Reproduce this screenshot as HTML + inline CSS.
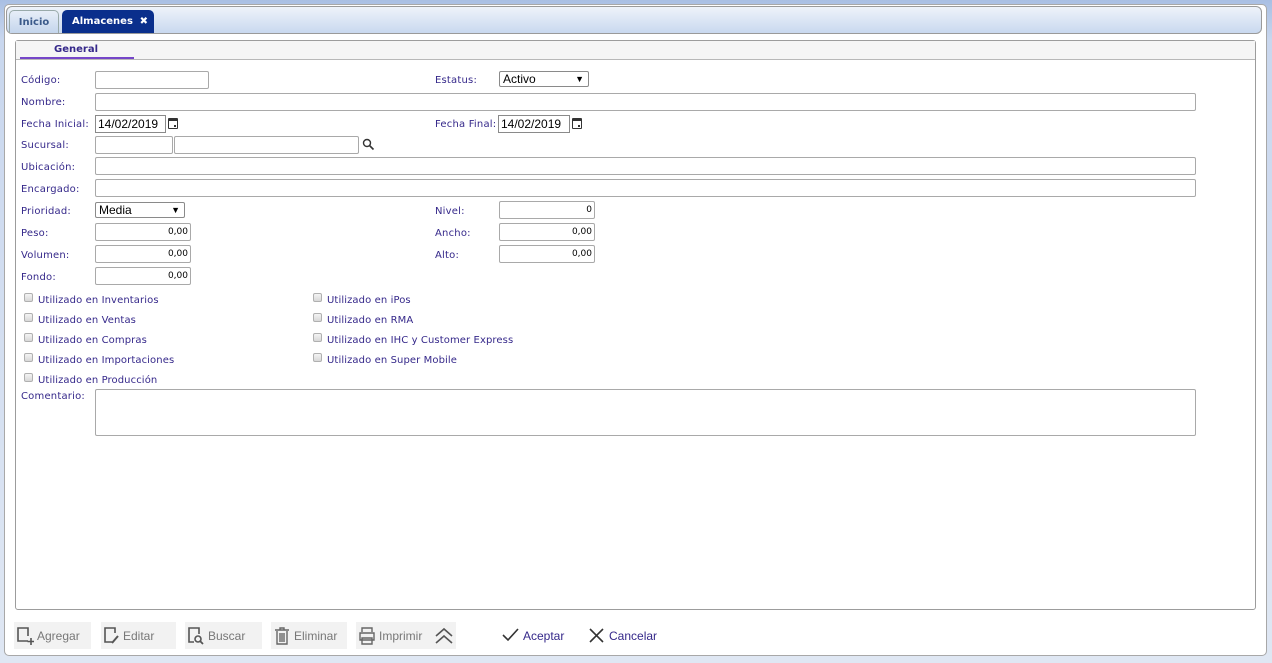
<!DOCTYPE html>
<html><head><meta charset="utf-8"><style>
*{box-sizing:border-box;margin:0;padding:0}
body{width:1272px;height:663px;background:linear-gradient(#a9bfe3,#c9d7ee 40px,#dfe7f3);font-family:"DejaVu Sans","Liberation Sans",sans-serif;font-size:10px;position:relative;overflow:hidden}
.a{position:absolute}
#outer{left:4px;top:4px;width:1263px;height:652px;background:#fff;border:1px solid #a8a8a8;border-radius:5px}
#tabbar{left:6px;top:6px;width:1256px;height:28px;background:linear-gradient(#eef3fa,#c9d9ef);border:1px solid #9a9a9a;border-radius:6px}
.tab{height:23px;top:10px;border-radius:5px 5px 0 0;font-weight:bold;font-size:10px;line-height:24px;text-align:center}
#inner{left:15px;top:40px;width:1241px;height:570px;border:1px solid #9c9c9c;border-radius:3px;background:#fff}
#hdr{left:16px;top:41px;width:1239px;height:19px;background:#f5f5f5;border-bottom:1px solid #b8b8b8}
.lb{position:absolute;color:#35288a;font-size:10px;letter-spacing:0.2px;margin-top:1px}
.in{position:absolute;border:1px solid #a9a9a9;border-radius:2px;background:#fff;height:18px;color:#000;line-height:16px;text-align:right;padding-right:2px;font-family:"DejaVu Sans",sans-serif;font-size:9px}
.dt{position:absolute;border:1px solid #8a8a8a;height:18px;width:72px;line-height:16px;padding-left:2px;font-family:"Liberation Sans",sans-serif;font-size:12px}
.sel{position:absolute;border:1px solid #8a8a8a;border-radius:2px;height:16px;font-family:"Liberation Sans",sans-serif;font-size:12px;line-height:14px;padding-left:3px}
.sel:after{content:"▼";position:absolute;right:4px;top:0;font-size:9px}
.cb{position:absolute;width:9px;height:9px;border:1px solid #b0b0b0;border-radius:2px;background:linear-gradient(#f4f4f4,#d8d8d8)}
.ct{position:absolute;color:#35288a;font-size:10px;letter-spacing:0.1px;margin-top:1px}
.btn{position:absolute;top:622px;height:27px;background:#f2f2f2;color:#777;font-family:"Liberation Sans",sans-serif;font-size:12px;line-height:28px}
.btn svg{position:absolute;top:4px}
.btn span{position:absolute}
.cal{position:absolute;width:10px;height:11px;border:1.5px solid #333;border-top-width:3px;border-radius:1px}
.cal:after{content:"";position:absolute;right:1px;bottom:1px;width:2px;height:2px;background:#333}
</style></head><body>
<div id="outer" class="a"></div>
<div id="tabbar" class="a"></div>
<div class="a tab" style="left:9px;width:50px;background:linear-gradient(#e7eef8,#c4d5ec);border:1px solid #9aa;border-bottom:none;color:#3b5a8a">Inicio</div>
<div class="a tab" style="left:62px;width:92px;background:#0a2f8c;color:#fff;text-align:left;padding-left:10px">Almacenes <span style="position:absolute;right:6px">✖</span></div>
<div id="inner" class="a"></div>
<div id="hdr" class="a"></div>
<div class="a" style="left:54px;top:44px;font-weight:bold;color:#35288a;font-size:10px">General</div>
<div class="a" style="left:20px;top:57px;width:114px;height:2px;background:#7546c8"></div>

<div class="lb" style="left:21px;top:74px">Código:</div>
<div class="in" style="left:95px;top:71px;width:114px"></div>
<div class="lb" style="left:435px;top:74px">Estatus:</div>
<div class="sel" style="left:499px;top:71px;width:90px">Activo</div>
<div class="lb" style="left:21px;top:96px">Nombre:</div>
<div class="in" style="left:95px;top:93px;width:1101px"></div>
<div class="lb" style="left:21px;top:118px">Fecha Inicial:</div>
<div class="dt" style="left:95px;top:115px;width:71px">14/02/2019</div>
<div class="cal" style="left:168px;top:118px"></div>
<div class="lb" style="left:435px;top:118px">Fecha Final:</div>
<div class="dt" style="left:498px;top:115px">14/02/2019</div>
<div class="cal" style="left:572px;top:118px"></div>
<div class="lb" style="left:21px;top:139px">Sucursal:</div>
<div class="in" style="left:95px;top:136px;width:78px"></div>
<div class="in" style="left:174px;top:136px;width:185px"></div>
<svg class="a" style="left:362px;top:138px" width="13" height="13" viewBox="0 0 13 13"><circle cx="5" cy="5" r="3.5" fill="none" stroke="#333" stroke-width="1.4"/><path d="M7.5 7.5L11.5 11.5" stroke="#333" stroke-width="1.6"/></svg>
<div class="lb" style="left:21px;top:161px">Ubicación:</div>
<div class="in" style="left:95px;top:157px;width:1101px"></div>
<div class="lb" style="left:21px;top:183px">Encargado:</div>
<div class="in" style="left:95px;top:179px;width:1101px"></div>
<div class="lb" style="left:21px;top:205px">Prioridad:</div>
<div class="sel" style="left:95px;top:202px;width:90px">Media</div>
<div class="lb" style="left:435px;top:205px">Nivel:</div>
<div class="in" style="left:499px;top:201px;width:96px">0</div>
<div class="lb" style="left:21px;top:227px">Peso:</div>
<div class="in" style="left:95px;top:223px;width:96px">0,00</div>
<div class="lb" style="left:435px;top:227px">Ancho:</div>
<div class="in" style="left:499px;top:223px;width:96px">0,00</div>
<div class="lb" style="left:21px;top:249px">Volumen:</div>
<div class="in" style="left:95px;top:245px;width:96px">0,00</div>
<div class="lb" style="left:435px;top:249px">Alto:</div>
<div class="in" style="left:499px;top:245px;width:96px">0,00</div>
<div class="lb" style="left:21px;top:271px">Fondo:</div>
<div class="in" style="left:95px;top:267px;width:96px">0,00</div>

<div class="cb" style="left:24px;top:293px"></div><div class="ct" style="left:38px;top:294px">Utilizado en Inventarios</div>
<div class="cb" style="left:24px;top:313px"></div><div class="ct" style="left:38px;top:314px">Utilizado en Ventas</div>
<div class="cb" style="left:24px;top:333px"></div><div class="ct" style="left:38px;top:334px">Utilizado en Compras</div>
<div class="cb" style="left:24px;top:353px"></div><div class="ct" style="left:38px;top:354px">Utilizado en Importaciones</div>
<div class="cb" style="left:24px;top:373px"></div><div class="ct" style="left:38px;top:374px">Utilizado en Producción</div>
<div class="cb" style="left:313px;top:293px"></div><div class="ct" style="left:327px;top:294px">Utilizado en iPos</div>
<div class="cb" style="left:313px;top:313px"></div><div class="ct" style="left:327px;top:314px">Utilizado en RMA</div>
<div class="cb" style="left:313px;top:333px"></div><div class="ct" style="left:327px;top:334px">Utilizado en IHC y Customer Express</div>
<div class="cb" style="left:313px;top:353px"></div><div class="ct" style="left:327px;top:354px">Utilizado en Super Mobile</div>
<div class="lb" style="left:21px;top:390px">Comentario:</div>
<div class="in" style="left:95px;top:389px;width:1101px;height:47px"></div>

<div class="btn" style="left:14px;width:77px"><svg style="left:2px" width="18" height="20" viewBox="0 0 18 20"><path d="M12 15H2V2h10v8" fill="none" stroke="#555" stroke-width="1.6"/><path d="M15 12v7M11.5 15.5h7" stroke="#555" stroke-width="1.6"/></svg><span style="left:23px">Agregar</span></div>
<div class="btn" style="left:101px;width:75px"><svg style="left:2px" width="18" height="20" viewBox="0 0 18 20"><path d="M9 16H2V2h10v5" fill="none" stroke="#555" stroke-width="1.6"/><path d="M9 17l6-7" stroke="#555" stroke-width="2"/></svg><span style="left:22px">Editar</span></div>
<div class="btn" style="left:185px;width:77px"><svg style="left:2px" width="18" height="20" viewBox="0 0 18 20"><path d="M7 16H2V2h10v6" fill="none" stroke="#555" stroke-width="1.6"/><circle cx="11" cy="13" r="3" fill="none" stroke="#555" stroke-width="1.6"/><path d="M13 15l3 3" stroke="#555" stroke-width="1.8"/></svg><span style="left:23px">Buscar</span></div>
<div class="btn" style="left:271px;width:76px"><svg style="left:3px" width="16" height="20" viewBox="0 0 16 20"><path d="M1 4h14M6 4V2h4v2M3 5v13h10V5M6 7v9M8 7v9M10 7v9" fill="none" stroke="#666" stroke-width="1.4"/></svg><span style="left:23px">Eliminar</span></div>
<div class="btn" style="left:356px;width:100px"><svg style="left:2px" width="18" height="20" viewBox="0 0 18 20"><path d="M4 6V2h10v4M2 7h14v7H2zM4 12h10v6H4z" fill="none" stroke="#666" stroke-width="1.4"/></svg><span style="left:23px">Imprimir</span><svg style="left:78px;top:5px" width="20" height="18" viewBox="0 0 20 18"><path d="M2 9l8-7 8 7M2 16l8-7 8 7" fill="none" stroke="#555" stroke-width="1.6"/></svg></div>
<svg class="a" style="left:502px;top:628px" width="17" height="14" viewBox="0 0 17 14"><path d="M1 7l5 5L16 1" fill="none" stroke="#333" stroke-width="1.6"/></svg>
<div class="a" style="left:523px;top:629px;color:#35288a;font-family:'Liberation Sans',sans-serif;font-size:12px">Aceptar</div>
<svg class="a" style="left:589px;top:628px" width="15" height="15" viewBox="0 0 15 15"><path d="M1 1l13 13M14 1L1 14" stroke="#333" stroke-width="1.6"/></svg>
<div class="a" style="left:609px;top:629px;color:#35288a;font-family:'Liberation Sans',sans-serif;font-size:12px">Cancelar</div>
</body></html>
